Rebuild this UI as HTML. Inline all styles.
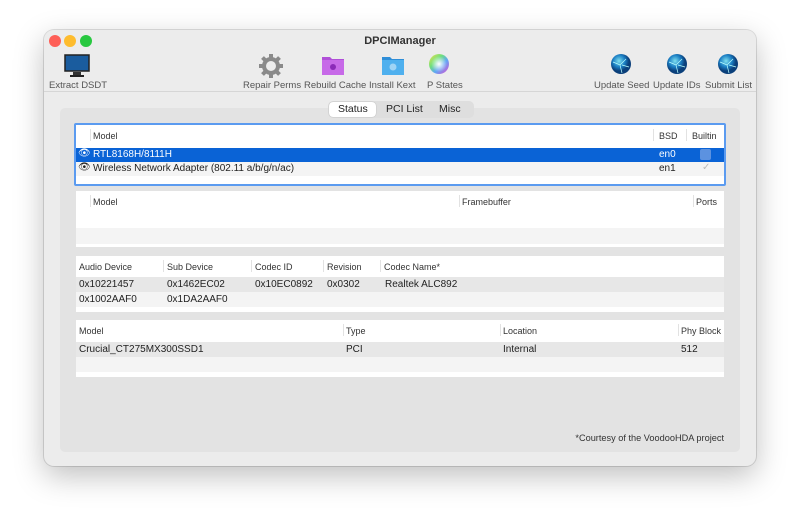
<!DOCTYPE html>
<html><head><style>
*{margin:0;padding:0;box-sizing:border-box}
body{width:800px;height:525px;background:#fff;font-family:"Liberation Sans",sans-serif;position:relative;overflow:hidden}
.win{position:absolute;left:44px;top:30px;width:712px;height:436px;background:#ececec;border-radius:10px;box-shadow:0 10px 30px rgba(0,0,0,.25),0 0 0 1px rgba(0,0,0,.12)}
.tb{position:absolute;left:0;top:0;width:712px;height:62px;background:#ececec;border-bottom:1px solid #d6d6d6;border-radius:10px 10px 0 0}
.dot{position:absolute;top:5px;width:12px;height:12px;border-radius:50%}
.title{position:absolute;top:5px;left:0;width:712px;text-align:center;font-size:11px;font-weight:bold;color:#333}
.lbl{position:absolute;top:50px;font-size:9.5px;color:#555;white-space:nowrap}
.ic{position:absolute}
.panel{position:absolute;left:16px;top:78px;width:680px;height:344px;background:#e3e3e3;border-radius:5px}
.seg{position:absolute;left:284px;top:71px;height:17px;width:146px;background:#dedede;border-radius:5px;font-size:10.5px;color:#222}
.seg span{position:absolute;top:2px}
.t{position:absolute;background:#fff;font-size:9px;color:#333}
.t .r{position:absolute;left:0;right:0;font-size:10px;color:#222}
.c{position:absolute;white-space:nowrap}
.sep{position:absolute;width:1px;background:#e2e2e2;height:12px;top:4px}
.g{background:#e7e7e7}
.w{background:#f4f4f4}
</style></head><body>
<div class="win">
 <div class="tb">
  <div class="dot" style="left:5px;background:#fe5f57"></div>
  <div class="dot" style="left:20px;background:#febc2e"></div>
  <div class="dot" style="left:36px;background:#28c840"></div>
  <div class="title">DPCIManager</div>
  <svg class="ic" style="left:20px;top:24px" width="26" height="24"><rect x="1" y="1" width="24" height="16" fill="#1a5c9e" stroke="#222" stroke-width="1.5"/><rect x="9" y="18" width="8" height="3" fill="#333"/><rect x="6" y="21" width="14" height="2" fill="#222"/></svg>
  <div class="lbl" style="left:5px">Extract DSDT</div>
  <svg class="ic" style="left:214px;top:23px" width="26" height="26"><g fill="#8a8a8a"><circle cx="13" cy="13" r="9"/><g stroke="#8a8a8a" stroke-width="4"><line x1="13" y1="1" x2="13" y2="25"/><line x1="1" y1="13" x2="25" y2="13"/><line x1="4.5" y1="4.5" x2="21.5" y2="21.5"/><line x1="21.5" y1="4.5" x2="4.5" y2="21.5"/></g></g><circle cx="13" cy="13" r="5" fill="#ececec"/></svg>
  <div class="lbl" style="left:199px">Repair Perms</div>
  <svg class="ic" style="left:277px;top:24px" width="24" height="22"><path d="M1 3h8l2 2h12v16H1z" fill="#b04fd8"/><rect x="1" y="6" width="22" height="15" fill="#c76ae8"/><circle cx="12" cy="13" r="3" fill="#8b2ab8"/></svg>
  <div class="lbl" style="left:260px">Rebuild Cache</div>
  <svg class="ic" style="left:337px;top:24px" width="24" height="22"><path d="M1 3h8l2 2h12v16H1z" fill="#2f8ed8"/><rect x="1" y="6" width="22" height="15" fill="#4fb0ee"/><circle cx="12" cy="13" r="3.5" fill="#9fd4f5"/></svg>
  <div class="lbl" style="left:325px">Install Kext</div>
  <svg class="ic" style="left:384px;top:23px" width="22" height="22"><defs><radialGradient id="cw"><stop offset="0" stop-color="#fff"/><stop offset="1" stop-color="#fff" stop-opacity="0"/></radialGradient><linearGradient id="cl" x1="0" y1="0" x2="1" y2="1"><stop offset="0" stop-color="#f6e04a"/><stop offset=".35" stop-color="#6ee07a"/><stop offset=".6" stop-color="#5fa8f5"/><stop offset="1" stop-color="#e04ad0"/></linearGradient></defs><circle cx="11" cy="11" r="10" fill="url(#cl)"/><circle cx="11" cy="11" r="8" fill="url(#cw)"/></svg>
  <div class="lbl" style="left:383px">P States</div>
  <svg class="ic" style="left:566px;top:23px" width="22" height="22"><defs><radialGradient id="gl" cx=".4" cy=".35"><stop offset="0" stop-color="#7fe0f0"/><stop offset=".6" stop-color="#1b7fc4"/><stop offset="1" stop-color="#0a3f7a"/></radialGradient></defs><circle cx="11" cy="11" r="10" fill="url(#gl)"/><path d="M3 9l7 3 6-6M10 12l2 8M12 12l7 2" stroke="#bff" stroke-width=".7" fill="none"/></svg>
  <div class="lbl" style="left:550px">Update Seed</div>
  <svg class="ic" style="left:622px;top:23px" width="22" height="22"><circle cx="11" cy="11" r="10" fill="url(#gl)"/><path d="M3 9l7 3 6-6M10 12l2 8M12 12l7 2" stroke="#bff" stroke-width=".7" fill="none"/></svg>
  <div class="lbl" style="left:609px">Update IDs</div>
  <svg class="ic" style="left:673px;top:23px" width="22" height="22"><circle cx="11" cy="11" r="10" fill="url(#gl)"/><path d="M3 9l7 3 6-6M10 12l2 8M12 12l7 2" stroke="#bff" stroke-width=".7" fill="none"/></svg>
  <div class="lbl" style="left:661px">Submit List</div>
 </div>
 <div class="panel"></div>
 <div class="seg"><div style="position:absolute;left:1px;top:1px;width:47px;height:15px;background:#fff;border-radius:4px;box-shadow:0 0 1px rgba(0,0,0,.3)"></div><span style="left:10px">Status</span><span style="left:58px">PCI List</span><span style="left:111px">Misc</span></div>

 <div class="t" style="left:30px;top:93px;width:652px;height:63px;border:2px solid #5b9bf0;border-radius:2px">
  <div class="c" style="left:17px;top:6px">Model</div><div class="sep" style="left:14px"></div>
  <div class="c" style="left:583px;top:6px">BSD</div><div class="sep" style="left:577px"></div>
  <div class="c" style="left:616px;top:6px">Builtin</div><div class="sep" style="left:610px"></div>
  <div class="r" style="top:23px;height:14px;background:#0a63d6;color:#fff"><span class="c" style="left:17px;top:1px">RTL8168H/8111H</span><span class="c" style="left:583px;top:1px">en0</span><span class="c" style="left:2px;top:0px">👁</span><span class="c" style="left:624px;top:1px;width:11px;height:11px;background:#5c92e0;border-radius:2px"></span></div>
  <div class="r" style="top:37px;height:14px;background:#f4f4f4"><span class="c" style="left:17px;top:1px">Wireless Network Adapter (802.11 a/b/g/n/ac)</span><span class="c" style="left:583px;top:1px">en1</span><span class="c" style="left:2px;top:0">👁</span><span class="c" style="left:626px;top:0;color:#bbb">✓</span></div>
 </div>

 <div class="t" style="left:32px;top:161px;width:648px;height:56px">
  <div class="c" style="left:17px;top:6px">Model</div><div class="sep" style="left:14px"></div>
  <div class="c" style="left:386px;top:6px">Framebuffer</div><div class="sep" style="left:383px"></div>
  <div class="c" style="left:620px;top:6px">Ports</div><div class="sep" style="left:617px"></div>
  <div class="r w" style="top:37px;height:16px"></div>
 </div>

 <div class="t" style="left:32px;top:226px;width:648px;height:56px">
  <div class="c" style="left:3px;top:6px">Audio Device</div>
  <div class="c" style="left:91px;top:6px">Sub Device</div><div class="sep" style="left:87px"></div>
  <div class="c" style="left:179px;top:6px">Codec ID</div><div class="sep" style="left:175px"></div>
  <div class="c" style="left:251px;top:6px">Revision</div><div class="sep" style="left:247px"></div>
  <div class="c" style="left:308px;top:6px">Codec Name*</div><div class="sep" style="left:304px"></div>
  <div class="r g" style="top:21px;height:15px"><span class="c" style="left:3px;top:2px">0x10221457</span><span class="c" style="left:91px;top:2px">0x1462EC02</span><span class="c" style="left:179px;top:2px">0x10EC0892</span><span class="c" style="left:251px;top:2px">0x0302</span><span class="c" style="left:309px;top:2px">Realtek ALC892</span></div>
  <div class="r w" style="top:36px;height:15px"><span class="c" style="left:3px;top:2px">0x1002AAF0</span><span class="c" style="left:91px;top:2px">0x1DA2AAF0</span></div>
 </div>

 <div class="t" style="left:32px;top:290px;width:648px;height:57px">
  <div class="c" style="left:3px;top:6px">Model</div>
  <div class="c" style="left:270px;top:6px">Type</div><div class="sep" style="left:267px"></div>
  <div class="c" style="left:427px;top:6px">Location</div><div class="sep" style="left:424px"></div>
  <div class="c" style="left:605px;top:6px">Phy Block</div><div class="sep" style="left:602px"></div>
  <div class="r g" style="top:22px;height:15px"><span class="c" style="left:3px;top:2px">Crucial_CT275MX300SSD1</span><span class="c" style="left:270px;top:2px">PCI</span><span class="c" style="left:427px;top:2px">Internal</span><span class="c" style="left:605px;top:2px">512</span></div>
  <div class="r w" style="top:37px;height:15px"></div>
 </div>

 <div style="position:absolute;right:32px;top:403px;font-size:9.2px;color:#333">*Courtesy of the VoodooHDA project</div>
</div>
</body></html>
